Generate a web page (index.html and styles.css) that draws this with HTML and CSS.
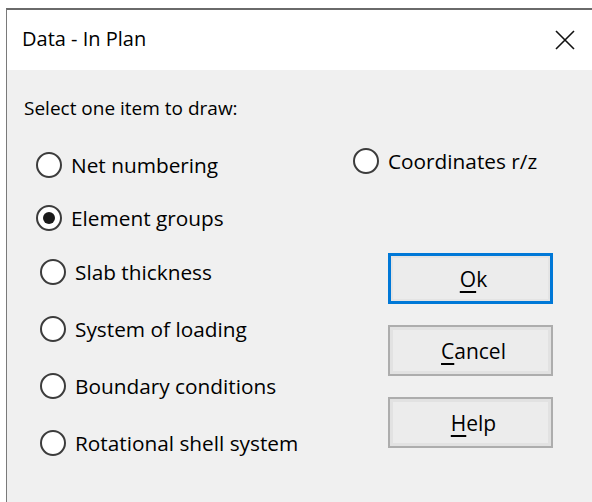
FILE: index.html
```html
<!DOCTYPE html>
<html lang="en">
<head>
<meta charset="utf-8">
<title>Data - In Plan</title>
<link rel="stylesheet" href="styles.css">
</head>
<body>
<div class="window">
  <div class="titlebar">
    <span class="title">Data - In Plan</span>
    <button class="close" aria-label="Close">
      <svg width="20" height="20" viewBox="0 0 20 20"><path d="M1 1 L19 19 M19 1 L1 19" stroke="#111" stroke-width="1.6" fill="none"/></svg>
    </button>
  </div>
  <div class="body">
    <p class="prompt">Select one item to draw:</p>
    <div class="columns">
      <div class="choices">
        <div class="group group-a">
          <label class="radio"><input type="radio" name="item"><span>Net numbering</span></label>
          <label class="radio"><input type="radio" name="item" checked><span>Element groups</span></label>
        </div>
        <div class="group group-b">
          <label class="radio"><input type="radio" name="item"><span>Slab thickness</span></label>
          <label class="radio"><input type="radio" name="item"><span>System of loading</span></label>
          <label class="radio"><input type="radio" name="item"><span>Boundary conditions</span></label>
          <label class="radio"><input type="radio" name="item"><span>Rotational shell system</span></label>
        </div>
      </div>
      <div class="side">
        <label class="radio"><input type="radio" name="item"><span>Coordinates r/z</span></label>
        <div class="buttons">
          <button class="btn default"><u>O</u>k</button>
          <button class="btn"><u>C</u>ancel</button>
          <button class="btn"><u>H</u>elp</button>
        </div>
      </div>
    </div>
  </div>
</div>
</body>
</html>
```

FILE: styles.css
```css
html, body {
  margin: 0;
  padding: 0;
  background: #ffffff;
  overflow: hidden;
}

body {
  width: 592px;
  height: 502px;
  font-family: "Open Sans", "Noto Sans", sans-serif;
  font-size: 19px;
  color: #000;
}

.window {
  margin: 8px 0 0 6px;
  width: 595px;
  height: 494px;
  border-top: 2px solid #6a6a6a;
  border-left: 1px solid #7a7a7a;
  background: #f0f0f0;
}

.titlebar {
  height: 60px;
  background: #ffffff;
  display: flex;
  align-items: center;
  padding: 0 27px 0 15px;
}

.title {
  font-size: 20px;
  line-height: 24px;
  margin-top: -2px;
}

.close {
  margin-left: auto;
  width: 20px;
  height: 20px;
  padding: 0;
  border: 0;
  background: none;
  display: flex;
}

.body {
  padding: 26px 0 0 17px;
}

.prompt {
  margin: 0;
  line-height: 24px;
}

.columns {
  display: flex;
  margin-top: 28px;
  margin-left: -17px;
}

.choices {
  width: 346px;
  padding: 4px 0 0 29px;
  box-sizing: border-box;
}

.group {
  display: flex;
  flex-direction: column;
}

.group-a {
  gap: 27px;
}

.group-b {
  gap: 31px;
  margin-top: 28px;
  padding-left: 4px;
}

.radio {
  display: flex;
  align-items: center;
  height: 26px;
  line-height: 26px;
  font-size: 20.8px;
  white-space: nowrap;
}

.radio input {
  appearance: none;
  -webkit-appearance: none;
  margin: 0 9px 0 0;
  width: 26px;
  height: 26px;
  border: 2px solid #3c3c3c;
  border-radius: 50%;
  background: #ffffff;
  box-sizing: border-box;
  flex: none;
  display: grid;
  place-items: center;
}

.radio input:checked::after {
  content: "";
  width: 12px;
  height: 12px;
  border-radius: 50%;
  background: #1a1a1a;
}

.buttons {
  display: flex;
  flex-direction: column;
  gap: 21px;
  margin: 79px 0 0 35px;
}

.btn {
  width: 165px;
  height: 51px;
  box-sizing: border-box;
  font: inherit;
  font-size: 21px;
  color: #000;
  background: #ececec;
  border: 2px solid #adadad;
  box-shadow: inset 0 0 0 3px #e2e2e2;
  padding: 0 0 0 6px;
}

.btn.default {
  border: 3px solid #0078d7;
  box-shadow: inset 0 0 0 2px #e4e4e4;
}

.btn u {
  text-decoration-thickness: 2px;
  text-underline-offset: 4px;
}
```
